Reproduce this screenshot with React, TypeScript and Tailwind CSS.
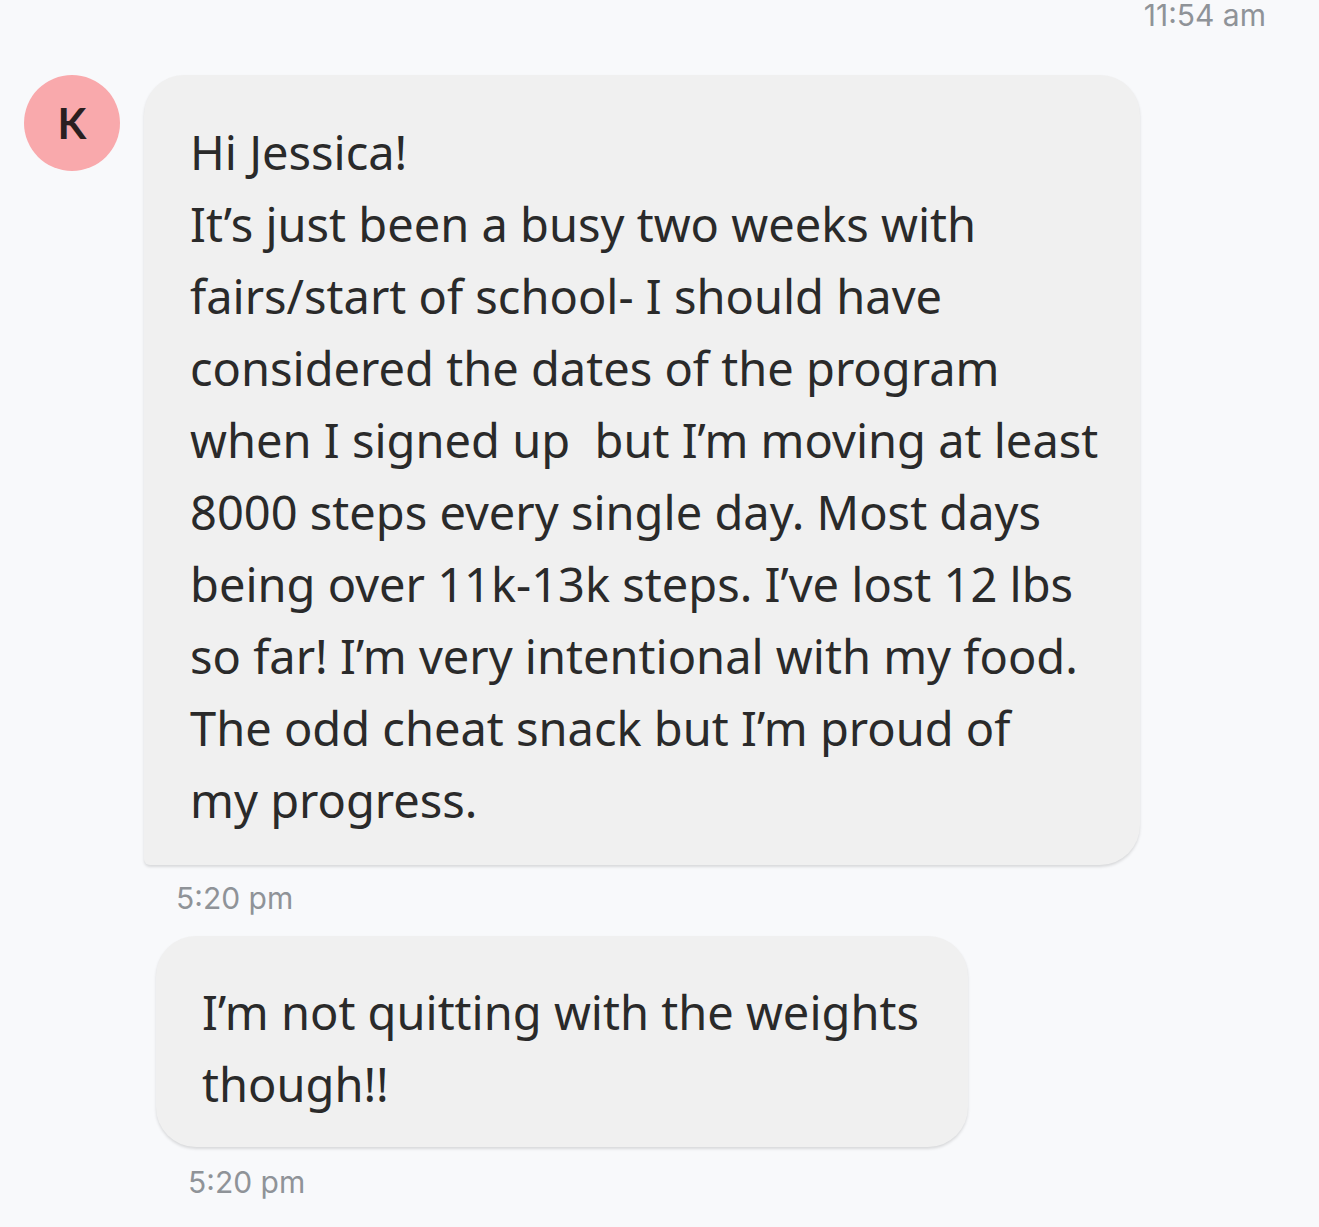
import React from 'react';

const bodyFont = "font-['Noto_Sans','Open_Sans',sans-serif]";
const metaFont = "font-['Inter','Roboto',sans-serif]";

function Timestamp({ time, className = '' }: { time: string; className?: string }) {
  return (
    <div className={`${metaFont} text-[30px] text-[#8f9398] ${className}`}>
      {time}
    </div>
  );
}

function Bubble({ text, className = '' }: { text: string; className?: string }) {
  return (
    <div
      className={`bg-[#f0f0f0] text-[#2a2a2a] ${bodyFont} text-[47px] leading-[72px] whitespace-pre shadow-[0_2px_3px_rgba(0,0,0,0.13)] ${className}`}
    >
      {text}
    </div>
  );
}

const firstMessage = [
  'Hi Jessica!',
  'It’s just been a busy two weeks with',
  'fairs/start of school- I should have',
  'considered the dates of the program',
  'when I signed up  but I’m moving at least',
  '8000 steps every single day. Most days',
  'being over 11k-13k steps. I’ve lost 12 lbs',
  'so far! I’m very intentional with my food.',
  'The odd cheat snack but I’m proud of',
  'my progress.',
].join('\n');

export default function App() {
  return (
    <div className="w-[1319px] h-[1227px] overflow-hidden bg-[#f8f9fb]">
      {/* last seen */}
      <div className="flex justify-end pr-[53px] pt-[1px]">
        <Timestamp time="11:54 am" className="leading-[28px]" />
      </div>

      <div className="flex gap-[24px] pl-[24px] mt-[46px]">
        {/* avatar */}
        <div className="flex h-[96px] w-[96px] shrink-0 items-center justify-center rounded-full bg-[#f9a9ac]">
          <span className="font-['Lato',sans-serif] text-[42px] font-bold text-[#2a1f20]">K</span>
        </div>

        <div className="flex flex-col">
          <Bubble
            className="w-[996px] rounded-[40px] rounded-bl-[6px] pl-[46px] pr-[40px] pt-[41px] pb-[29px] overflow-hidden"
            text={firstMessage}
          />
          <Timestamp time="5:20 pm" className="ml-[32px] mt-[16px] leading-[34px]" />

          <Bubble
            className="ml-[12px] mt-[21px] w-[812px] rounded-[40px] pl-[46px] pr-[50px] pt-[40px] pb-[27px] overflow-hidden"
            text={'I’m not quitting with the weights\nthough!!'}
          />
          <Timestamp time="5:20 pm" className="ml-[44px] mt-[18px] leading-[34px]" />
        </div>
      </div>
    </div>
  );
}
